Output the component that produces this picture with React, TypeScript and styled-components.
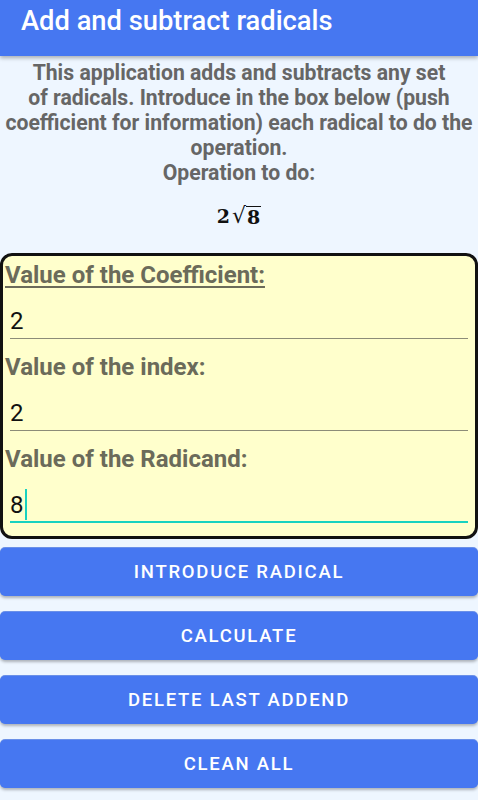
import React from "react";
import styled, { createGlobalStyle } from "styled-components";

const Global = createGlobalStyle`
  html, body { margin: 0; padding: 0; background: #eef6ff; }
  body { font-family: Roboto, "Noto Sans", sans-serif; }
  * { box-sizing: border-box; }
`;

const Page = styled.div`
  width: 478px;
  min-height: 800px;
  background: #eef6ff;
  display: flex;
  flex-direction: column;
`;

const AppBar = styled.header`
  height: 56px;
  background: #4677f1;
  display: flex;
  align-items: flex-start;
  padding: 6px 0 0 21px;
  box-shadow: 0 2px 4px rgba(0, 0, 0, 0.3);
  position: relative;
  z-index: 1;
`;

const Title = styled.h1`
  margin: 0;
  font-family: Roboto, sans-serif;
  font-weight: 500;
  font-size: 27.3px;
  line-height: 30px;
  color: #ffffff;
`;

const Intro = styled.p`
  margin: 4px 0 0;
  padding: 0 2px;
  text-align: center;
  font-family: Roboto, sans-serif;
  font-weight: 700;
  font-size: 21.2px;
  line-height: 25px;
  color: #666666;
`;

const MathLine = styled.div`
  margin-top: 16px;
  height: 30px;
  display: flex;
  justify-content: center;
  align-items: center;
  font-family: "DejaVu Serif", "Liberation Serif", serif;
  font-weight: 700;
  font-size: 19px;
  color: #111;
`;

const Root = styled.span`
  display: inline-flex;
  align-items: flex-end;
  margin-left: 2px;
`;

const RootSign = styled.span`
  font-weight: 400;
  font-size: 22px;
  line-height: 1;
`;

const Radicand = styled.span`
  border-top: 1.5px solid #111;
  padding: 1px 1px 0 1px;
  line-height: 1;
`;

const Card = styled.section`
  margin-top: 22px;
  border: 3px solid #111;
  border-radius: 12px;
  background: #ffffcc;
  padding: 5px 7px 13px 2px;
  display: flex;
  flex-direction: column;
`;

const Field = styled.div`
  display: flex;
  flex-direction: column;
`;

const Label = styled.label<{ $underline?: boolean }>`
  font-family: Roboto, sans-serif;
  font-weight: 700;
  font-size: 24px;
  line-height: 28px;
  color: #6b6b5a;
  text-decoration: ${(p) => (p.$underline ? "underline" : "none")};
  text-decoration-thickness: 1.5px;
  text-underline-offset: 3px;
`;

const Input = styled.div<{ $focused?: boolean }>`
  margin: 16px 0 0 5px;
  height: 34px;
  padding: 2px 0 0 0;
  display: flex;
  align-items: flex-start;
  font-family: Roboto, sans-serif;
  font-size: 24px;
  line-height: 28px;
  color: #111;
  border-bottom: ${(p) => (p.$focused ? "2.5px solid #18d2c0" : "1.5px solid #8c8c78")};
`;

const Caret = styled.span`
  display: inline-block;
  width: 2px;
  height: 31px;
  margin: -2px 0 0 1px;
  background: #18d2c0;
`;

const FieldGap = styled.div`
  height: 14px;
`;

const Buttons = styled.div`
  margin-top: 9px;
  display: flex;
  flex-direction: column;
  gap: 16px;
`;

const Button = styled.button`
  height: 48px;
  width: 100%;
  border: none;
  border-radius: 5px;
  background: #4677f1;
  color: #fff;
  font-family: Roboto, sans-serif;
  font-weight: 500;
  font-size: 18.5px;
  letter-spacing: 1.75px;
  text-transform: uppercase;
  box-shadow: 0 2px 3px rgba(0, 0, 0, 0.28), 0 -1px 0 rgba(20, 80, 220, 0.6);
  cursor: pointer;
`;

export default function App() {
  return (
    <Page>
      <Global />
      <AppBar>
        <Title>Add and subtract radicals</Title>
      </AppBar>
      <Intro>
        This application adds and subtracts any set
        <br />
        of radicals. Introduce in the box below (push coefficient for information) each radical to do the operation.
        <br />
        Operation to do:
      </Intro>
      <MathLine>
        2
        <Root>
          <RootSign>√</RootSign>
          <Radicand>8</Radicand>
        </Root>
      </MathLine>
      <Card>
        <Field>
          <Label $underline>Value of the Coefficient:</Label>
          <Input>2</Input>
        </Field>
        <FieldGap />
        <Field>
          <Label>Value of the index:</Label>
          <Input>2</Input>
        </Field>
        <FieldGap />
        <Field>
          <Label>Value of the Radicand:</Label>
          <Input $focused>
            8<Caret />
          </Input>
        </Field>
      </Card>
      <Buttons>
        <Button>Introduce radical</Button>
        <Button>Calculate</Button>
        <Button>Delete last addend</Button>
        <Button>Clean all</Button>
      </Buttons>
    </Page>
  );
}
